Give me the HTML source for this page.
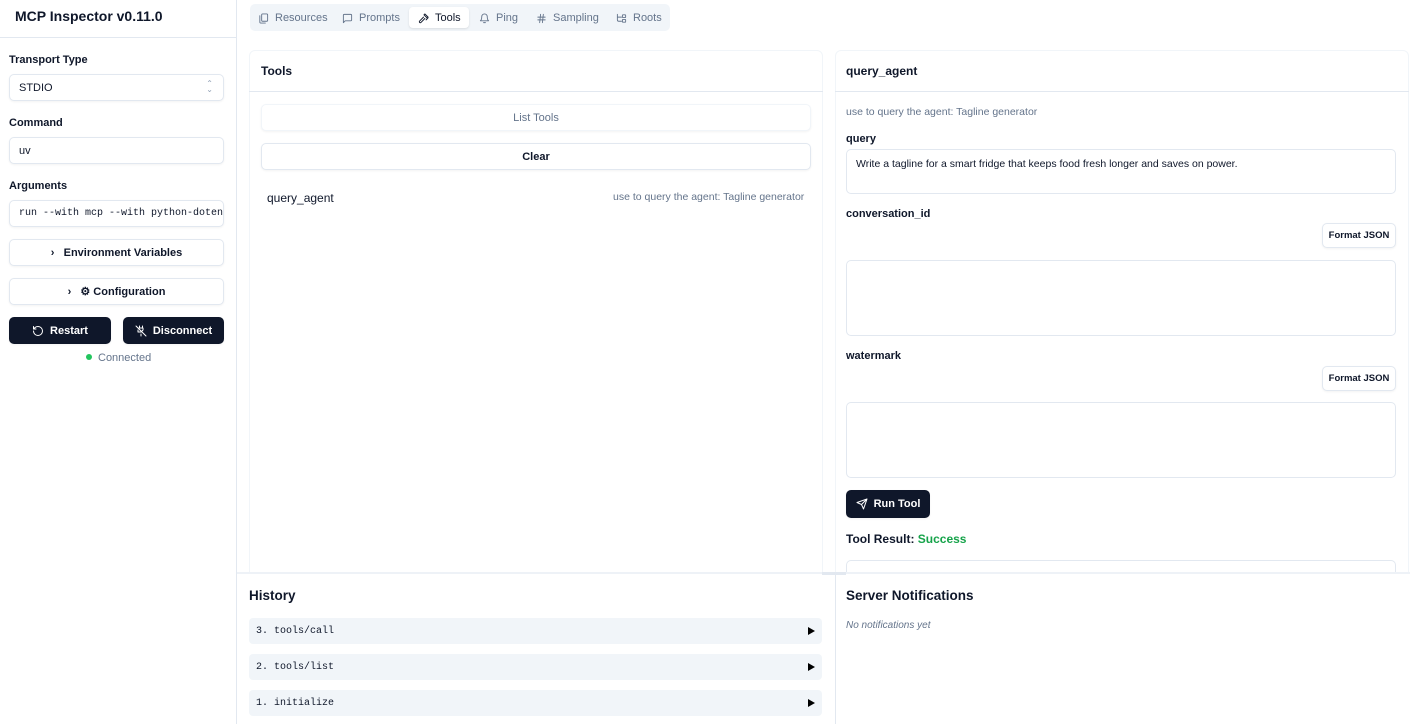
<!DOCTYPE html>
<html><head><meta charset="utf-8"><style>
*{box-sizing:border-box;margin:0;padding:0}
body{width:1410px;height:724px;overflow:hidden;background:#fff;font-family:"Liberation Sans",sans-serif;color:#0f172a;position:relative}
.a{position:absolute}
.lbl{font-size:11px;font-weight:bold;color:#0f172a}
.inp{position:absolute;left:9px;width:215px;height:27px;border:1px solid #e2e8f0;border-radius:5px;font-size:11px;padding-left:9px;display:flex;align-items:center;box-shadow:0 1px 2px rgba(0,0,0,.05);background:#fff}
.btn{position:absolute;border:1px solid #e2e8f0;border-radius:5px;display:flex;align-items:center;justify-content:center;font-size:11px;font-weight:bold;background:#fff;box-shadow:0 1px 2px rgba(0,0,0,.05)}
.dark{background:#0f172a;color:#fff;border-color:#0f172a}
.mono{font-family:"Liberation Mono",monospace}
.tab{position:absolute;top:7px;height:22px;display:flex;align-items:center;gap:6px;font-size:11px;color:#64748b}
.hist{position:absolute;left:249px;width:573px;height:26px;background:#f1f5f9;border-radius:4px;font-family:"Liberation Mono",monospace;font-size:10px;display:flex;align-items:center;padding-left:7px}
.hist:after{content:"";position:absolute;right:7px;top:9px;border-left:7px solid #000;border-top:4px solid transparent;border-bottom:4px solid transparent}
svg{fill:none;stroke:currentColor;stroke-width:2;stroke-linecap:round;stroke-linejoin:round}
</style></head><body>
<div class="a" style="left:0;top:0;width:237px;height:724px;border-right:1px solid #e2e8f0"></div>
<div class="a" style="left:0;top:37px;width:236px;border-top:1px solid #e2e8f0"></div>
<div class="a" style="left:15px;top:8px;font-size:14px;font-weight:bold">MCP Inspector v0.11.0</div>
<div class="a lbl" style="left:9px;top:54px">Transport Type</div>
<div class="inp" style="top:74px">STDIO<span class="a" style="right:10px;top:6px;font-size:8px;color:#94a3b8;line-height:6px">⌃<br>⌄</span></div>
<div class="a lbl" style="left:9px;top:117px">Command</div>
<div class="inp" style="top:137px">uv</div>
<div class="a lbl" style="left:9px;top:180px">Arguments</div>
<div class="inp mono" style="top:200px;font-size:10px;overflow:hidden;white-space:nowrap">run --with mcp --with python-doten</div>
<div class="btn" style="left:9px;top:239px;width:215px;height:27px">›&nbsp;&nbsp;&nbsp;Environment Variables</div>
<div class="btn" style="left:9px;top:278px;width:215px;height:27px">›&nbsp;&nbsp;&nbsp;⚙&nbsp;Configuration</div>
<div class="btn dark" style="left:9px;top:317px;width:102px;height:27px"><svg width="12" height="12" viewBox="0 0 24 24" style="margin-right:6px"><path d="M3 12a9 9 0 1 0 9-9 9.75 9.75 0 0 0-6.74 2.74L3 8"/><path d="M3 3v5h5"/></svg>Restart</div>
<div class="btn dark" style="left:123px;top:317px;width:101px;height:27px"><svg width="12" height="12" viewBox="0 0 24 24" style="margin-right:6px"><path d="M2 2l20 20M8 6h8v4l-2 2M6 10v4h6M12 18v4M9 2v4M15 2v4"/></svg>Disconnect</div>
<div class="a" style="left:86px;top:352px;font-size:11px;color:#64748b"><span style="display:inline-block;width:6px;height:6px;border-radius:3px;background:#22c55e;margin-right:6px;vertical-align:1px"></span>Connected</div>
<div class="a" style="left:250px;top:4px;width:420px;height:27px;background:#f1f5f9;border-radius:5px"></div>
<div class="a" style="left:409px;top:7px;width:60px;height:21px;background:#fff;border-radius:4px;box-shadow:0 1px 2px rgba(0,0,0,.1)"></div>
<div class="tab" style="left:258px"><svg width="11" height="11" viewBox="0 0 24 24"><rect x="8" y="2" width="13" height="16" rx="2"/><path d="M4 6v14a2 2 0 0 0 2 2h10"/></svg>Resources</div>
<div class="tab" style="left:342px"><svg width="11" height="11" viewBox="0 0 24 24"><path d="M21 15a2 2 0 0 1-2 2H7l-4 4V5a2 2 0 0 1 2-2h14a2 2 0 0 1 2 2z"/></svg>Prompts</div>
<div class="tab" style="left:418px;color:#0f172a"><svg width="11" height="11" viewBox="0 0 24 24"><path d="M15 12l-8.5 8.5a2.1 2.1 0 0 1-3-3L12 9M17.6 15L22 10.6M20 11l-7-7 2-2 7 7z"/></svg>Tools</div>
<div class="tab" style="left:479px"><svg width="11" height="11" viewBox="0 0 24 24"><path d="M6 8a6 6 0 0 1 12 0c0 7 3 9 3 9H3s3-2 3-9M10 21h4"/></svg>Ping</div>
<div class="tab" style="left:536px"><svg width="11" height="11" viewBox="0 0 24 24"><path d="M4 9h16M4 15h16M10 3L8 21M16 3l-2 18"/></svg>Sampling</div>
<div class="tab" style="left:616px"><svg width="11" height="11" viewBox="0 0 24 24"><path d="M3 3v12a3 3 0 0 0 3 3h6M3 9h9"/><rect x="14" y="4" width="7" height="6" rx="1"/><rect x="14" y="14" width="7" height="6" rx="1"/></svg>Roots</div>
<div class="a" style="left:249px;top:50px;width:574px;height:530px;border:1px solid #f1f5f9;border-radius:6px"></div>
<div class="a" style="left:249px;top:91px;width:574px;border-top:1px solid #e2e8f0"></div>
<div class="a" style="left:261px;top:64px;font-size:12px;font-weight:bold">Tools</div>
<div class="btn" style="left:261px;top:104px;width:550px;height:27px;color:#64748b;font-weight:normal;border-color:#f1f5f9">List Tools</div>
<div class="btn" style="left:261px;top:143px;width:550px;height:27px">Clear</div>
<div class="a" style="left:267px;top:191px;font-size:12px">query_agent</div>
<div class="a" style="left:613px;top:191px;font-size:10.5px;color:#64748b">use to query the agent: Tagline generator</div>
<div class="a" style="left:835px;top:50px;width:574px;height:530px;border:1px solid #f1f5f9;border-radius:6px"></div>
<div class="a" style="left:835px;top:91px;width:574px;border-top:1px solid #e2e8f0"></div>
<div class="a" style="left:846px;top:64px;font-size:12px;font-weight:bold">query_agent</div>
<div class="a" style="left:846px;top:106px;font-size:10.5px;color:#64748b">use to query the agent: Tagline generator</div>
<div class="a lbl" style="left:846px;top:133px">query</div>
<div class="a" style="left:846px;top:149px;width:550px;height:45px;border:1px solid #e2e8f0;border-radius:5px;font-size:10.5px;padding:8px 9px">Write a tagline for a smart fridge that keeps food fresh longer and saves on power.</div>
<div class="a lbl" style="left:846px;top:208px">conversation_id</div>
<div class="btn" style="left:1322px;top:223px;width:74px;height:25px;font-size:9.5px">Format JSON</div>
<div class="a" style="left:846px;top:260px;width:550px;height:76px;border:1px solid #e2e8f0;border-radius:5px"></div>
<div class="a lbl" style="left:846px;top:350px">watermark</div>
<div class="btn" style="left:1322px;top:366px;width:74px;height:25px;font-size:9.5px">Format JSON</div>
<div class="a" style="left:846px;top:402px;width:550px;height:76px;border:1px solid #e2e8f0;border-radius:5px"></div>
<div class="btn dark" style="left:846px;top:490px;width:84px;height:28px"><svg width="12" height="12" viewBox="0 0 24 24" style="margin-right:6px"><path d="M22 2L11 13M22 2l-7 20-4-9-9-4z"/></svg>Run Tool</div>
<div class="a" style="left:846px;top:532px;font-size:12px;font-weight:bold">Tool Result: <span style="color:#16a34a">Success</span></div>
<div class="a" style="left:846px;top:560px;width:550px;height:20px;border:1px solid #e2e8f0;border-bottom:none;border-radius:5px 5px 0 0"></div>
<div class="a" style="left:237px;top:572px;width:1173px;height:152px;background:#fff;border-top:2px solid #eef2f7"></div>
<div class="a" style="left:822px;top:572px;width:24px;height:3px;background:#e2e8f0"></div>
<div class="a" style="left:835px;top:574px;height:150px;border-left:1px solid #e2e8f0"></div>
<div class="a" style="left:249px;top:588px;font-size:13.5px;font-weight:bold">History</div>
<div class="hist" style="top:618px">3. tools/call</div>
<div class="hist" style="top:654px">2. tools/list</div>
<div class="hist" style="top:690px">1. initialize</div>
<div class="a" style="left:846px;top:588px;font-size:13.5px;font-weight:bold">Server Notifications</div>
<div class="a" style="left:846px;top:620px;font-size:10px;font-style:italic;color:#64748b">No notifications yet</div>
</body></html>
